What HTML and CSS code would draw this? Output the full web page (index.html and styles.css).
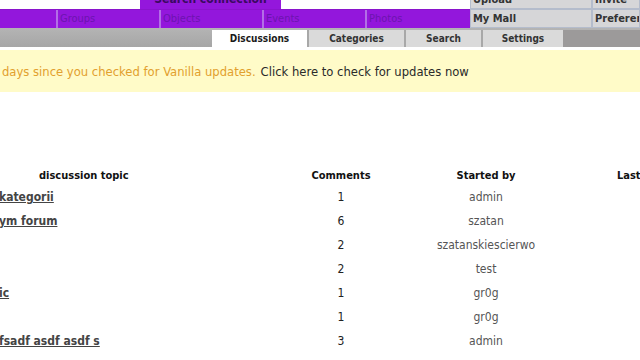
FILE: index.html
```html
<!DOCTYPE html>
<html>
<head>
<meta charset="utf-8">
<link rel="stylesheet" href="styles.css">
</head>
<body>
<div class="page">
  <div class="row1">
    <div class="blank1"></div>
    <div class="search-conn">Search connection</div>
    <div class="blank2"></div>
    <div class="gcell wide">Upload</div>
    <div class="gcell">Invite</div>
  </div>
  <div class="row2">
    <div class="purple">
      <div class="pcell first"></div>
      <div class="pcell">Groups</div>
      <div class="pcell">Objects</div>
      <div class="pcell">Events</div>
      <div class="pcell last">Photos</div>
    </div>
    <div class="gcell wide">My Mall</div>
    <div class="gcell">Preferen</div>
  </div>
  <div class="tabbar">
    <div class="tabs">
      <div class="tab active">Discussions</div>
      <div class="tab t-cat">Categories</div>
      <div class="tab t-search">Search</div>
      <div class="tab t-set">Settings</div>
    </div>
  </div>
  <div class="notice">
    <span class="warn">days since you checked for Vanilla updates.</span>
    <span class="link">Click here to check for updates now</span>
  </div>
  <div class="table">
    <div class="hd topic-h">discussion topic</div>
    <div class="hd c">Comments</div>
    <div class="hd c">Started by</div>
    <div class="hd last-h">Last</div>

    <div class="topic"><a>kategorii</a></div><div class="num">1</div><div class="user">admin</div><div></div>
    <div class="topic"><a>ym forum</a></div><div class="num">6</div><div class="user">szatan</div><div></div>
    <div class="topic"></div><div class="num">2</div><div class="user">szatanskiescierwo</div><div></div>
    <div class="topic"></div><div class="num">2</div><div class="user">test</div><div></div>
    <div class="topic"><a>ic</a></div><div class="num">1</div><div class="user">gr0g</div><div></div>
    <div class="topic"></div><div class="num">1</div><div class="user">gr0g</div><div></div>
    <div class="topic"><a>fsadf asdf asdf s</a></div><div class="num">3</div><div class="user">admin</div><div></div>
  </div>
</div>
</body>
</html>
```

FILE: styles.css
```css
html, body {
  margin: 0;
  padding: 0;
  background: #ffffff;
  overflow: hidden;
}
body {
  font-family: "DejaVu Sans Condensed", "DejaVu Sans", sans-serif;
  font-size: 12px;
  color: #222;
  width: 640px;
  height: 360px;
}
.page {
  padding-top: 1px;
  margin-top: -11px;
  background: #ffffff;
}
.row1 {
  display: flex;
  height: 19px;
  background: #ffffff;
}
.blank1 { width: 140px; flex: none; background: #ffffff; }
.search-conn {
  width: 141px;
  flex: none;
  background: #9417dc;
  color: #3a0a60;
  font-weight: bold;
  text-align: center;
  line-height: 13px;
  padding-top: 3px;
  box-sizing: border-box;
}
.blank2 { width: 189px; flex: none; background: #ffffff; }
.gcell {
  background: #d6d6d8;
  border: 1px solid #b4bccc;
  box-sizing: border-box;
  color: #333;
  font-weight: bold;
  font-size: 11px;
  padding-left: 2px;
  width: 48px;
  flex: none;
  overflow: hidden;
  white-space: nowrap;
}
.gcell.wide { width: 122px; }
.row1 .gcell { line-height: 18px; }
.row2 {
  display: flex;
  height: 19px;
}
.row2 .gcell { line-height: 17px; }
.purple {
  display: flex;
  width: 470px;
  flex: none;
  background: #9317dc;
  border-top: 1px solid #8a14cc;
  box-sizing: border-box;
}
.pcell {
  width: 103px;
  border-left: 2px solid #b36ee6;
  color: #6d14b0;
  font-size: 11px;
  line-height: 17px;
  padding-left: 2px;
  box-sizing: border-box;
}
.pcell.first { width: 56px; border-left: none; }
.pcell.last { flex: 1; }
.tabbar {
  height: 19px;
  background: linear-gradient(#b4b4b4, #a6a6a6);
  display: flex;
  align-items: flex-end;
}
.tabs {
  display: flex;
  margin-left: 212px;
  width: 428px;
  height: 17px;
  background: #9c9a9a;
}
.tab {
  height: 17px;
  line-height: 18px;
  text-align: center;
  font-weight: bold;
  font-size: 10px;
  color: #333;
  background: #dadada;
  border-right: 2px solid #a8a8a8;
  box-sizing: border-box;
}
.tab.active {
  width: 97px;
  background: #ffffff;
  color: #1a1a1a;
}
.t-cat { width: 97px; }
.t-search { width: 77px; }
.t-set { width: 80px; border-right: none; }
.notice {
  margin-top: 3px;
  height: 42px;
  background: #fffbc8;
  display: flex;
  align-items: center;
  padding-left: 2px;
  font-size: 12.9px;
  gap: 5px;
  white-space: nowrap;
}
.warn { color: #e2a02e; }
.link { color: #2a2a2a; }
.table {
  margin-top: 73px;
  display: grid;
  grid-template-columns: 282px 118px 172px 68px;
  grid-template-rows: 20px;
  grid-auto-rows: 24px;
  align-items: center;
}
.hd {
  font-weight: bold;
  font-size: 11px;
  color: #111;
  white-space: nowrap;
}
.topic-h { padding-left: 39px; }
.c { text-align: center; }
.last-h { padding-left: 45px; }
.topic a {
  font-weight: bold;
  color: #444;
  text-decoration: underline;
  white-space: nowrap;
  margin-left: -1px;
}
.num {
  text-align: center;
  color: #222;
}
.user {
  text-align: center;
  color: #555;
}
```
